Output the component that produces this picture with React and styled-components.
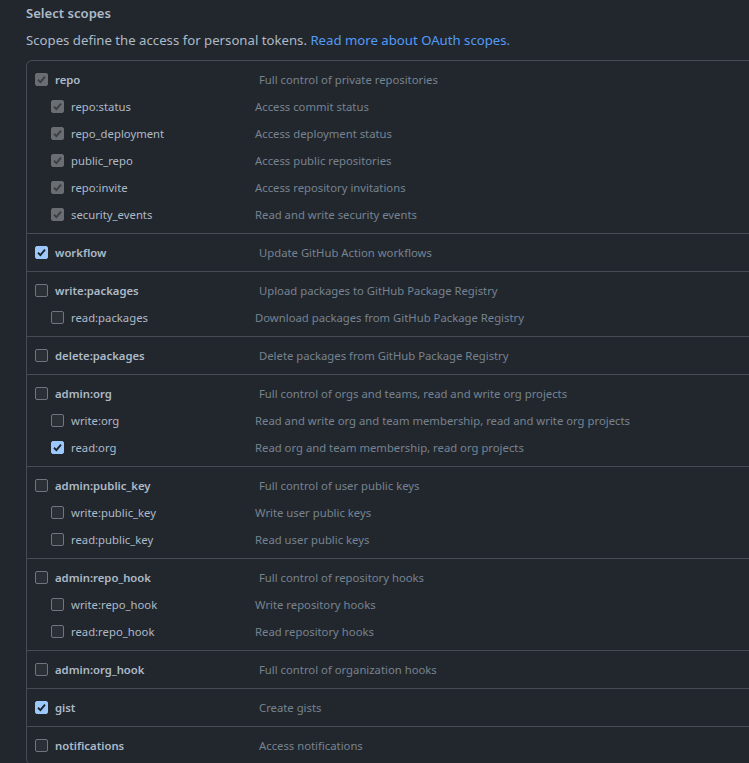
import React from "react";
import styled, { createGlobalStyle } from "styled-components";

const GlobalStyle = createGlobalStyle`
  html, body {
    margin: 0;
    padding: 0;
    background: #22272e;
    overflow: hidden;
  }
  body {
    font-family: "Segoe UI", "Noto Sans", "Liberation Sans", sans-serif;
    color: #adbac7;
  }
`;

const groups = [
  {
    parent: { name: "repo", desc: "Full control of private repositories", state: "disabled" },
    children: [
      { name: "repo:status", desc: "Access commit status", state: "disabled" },
      { name: "repo_deployment", desc: "Access deployment status", state: "disabled" },
      { name: "public_repo", desc: "Access public repositories", state: "disabled" },
      { name: "repo:invite", desc: "Access repository invitations", state: "disabled" },
      { name: "security_events", desc: "Read and write security events", state: "disabled" },
    ],
  },
  { parent: { name: "workflow", desc: "Update GitHub Action workflows", state: "checked" }, children: [] },
  {
    parent: { name: "write:packages", desc: "Upload packages to GitHub Package Registry" },
    children: [{ name: "read:packages", desc: "Download packages from GitHub Package Registry" }],
  },
  { parent: { name: "delete:packages", desc: "Delete packages from GitHub Package Registry" }, children: [] },
  {
    parent: { name: "admin:org", desc: "Full control of orgs and teams, read and write org projects" },
    children: [
      { name: "write:org", desc: "Read and write org and team membership, read and write org projects" },
      { name: "read:org", desc: "Read org and team membership, read org projects", state: "checked" },
    ],
  },
  {
    parent: { name: "admin:public_key", desc: "Full control of user public keys" },
    children: [
      { name: "write:public_key", desc: "Write user public keys" },
      { name: "read:public_key", desc: "Read user public keys" },
    ],
  },
  {
    parent: { name: "admin:repo_hook", desc: "Full control of repository hooks" },
    children: [
      { name: "write:repo_hook", desc: "Write repository hooks" },
      { name: "read:repo_hook", desc: "Read repository hooks" },
    ],
  },
  { parent: { name: "admin:org_hook", desc: "Full control of organization hooks" }, children: [] },
  { parent: { name: "gist", desc: "Create gists", state: "checked" }, children: [] },
  { parent: { name: "notifications", desc: "Access notifications" }, children: [] },
];

function Checkbox({ state }) {
  return (
    <Box $state={state}>
      {state && (
        <svg width="11" height="11" viewBox="0 0 12 12">
          <path
            d="M2.2 6.3 L4.8 8.8 L9.8 2.8"
            fill="none"
            stroke={state === "checked" ? "#1c2128" : "#3b3f44"}
            strokeWidth="2"
          />
        </svg>
      )}
    </Box>
  );
}

function ScopeRow({ item, child }) {
  return (
    <Row $child={child}>
      <LabelCell $child={child}>
        <Checkbox state={item.state} />
        <Label $child={child}>{item.name}</Label>
      </LabelCell>
      <Desc $child={child}>{item.desc}</Desc>
    </Row>
  );
}

export default function App() {
  return (
    <Page>
      <GlobalStyle />
      <Heading>Select scopes</Heading>
      <Intro>
        Scopes define the access for personal tokens. <Link>Read more about OAuth scopes.</Link>
      </Intro>
      <Table>
        {groups.map((g) => (
          <Group key={g.parent.name}>
            <ScopeRow item={g.parent} />
            {g.children.map((c) => (
              <ScopeRow key={c.name} item={c} child />
            ))}
          </Group>
        ))}
      </Table>
    </Page>
  );
}

const Page = styled.div`
  padding: 0 0 0 26px;
  width: 800px;
`;

const Heading = styled.div`
  font-size: 13.1px;
  font-weight: 600;
  line-height: 20px;
  padding-top: 3px;
`;

const Intro = styled.div`
  font-size: 13.2px;
  line-height: 20px;
  margin-top: 7px;
`;

const Link = styled.a`
  color: #539bf5;
`;

const Table = styled.div`
  margin-top: 10px;
  border: 1px solid #444c56;
  border-radius: 6px;
  width: 760px;
`;

const Group = styled.div`
  padding: 5px 0;
  & + & {
    border-top: 1px solid #444c56;
  }
`;

const Row = styled.div`
  display: flex;
  align-items: center;
  height: 27px;
`;

const LabelCell = styled.div`
  display: flex;
  align-items: center;
  width: ${(p) => (p.$child ? "228px" : "232px")};
  padding-left: ${(p) => (p.$child ? "24px" : "8px")};
  box-sizing: border-box;
`;

const Box = styled.span`
  width: 13px;
  height: 13px;
  box-sizing: border-box;
  border-radius: 2px;
  flex: none;
  display: flex;
  align-items: center;
  justify-content: center;
  margin-right: 7px;
  background: ${(p) =>
    p.$state === "checked" ? "#9cc8fb" : p.$state === "disabled" ? "#6a6d71" : "#2b3036"};
  border: 1px solid
    ${(p) => (p.$state === "checked" ? "#9cc8fb" : p.$state === "disabled" ? "#6a6d71" : "#6e767f")};
`;

const Label = styled.span`
  font-size: 11.3px;
  font-weight: ${(p) => (p.$child ? 400 : 600)};
  color: #adbac7;
`;

const Desc = styled.span`
  font-size: 11.3px;
  color: #768390;
`;
